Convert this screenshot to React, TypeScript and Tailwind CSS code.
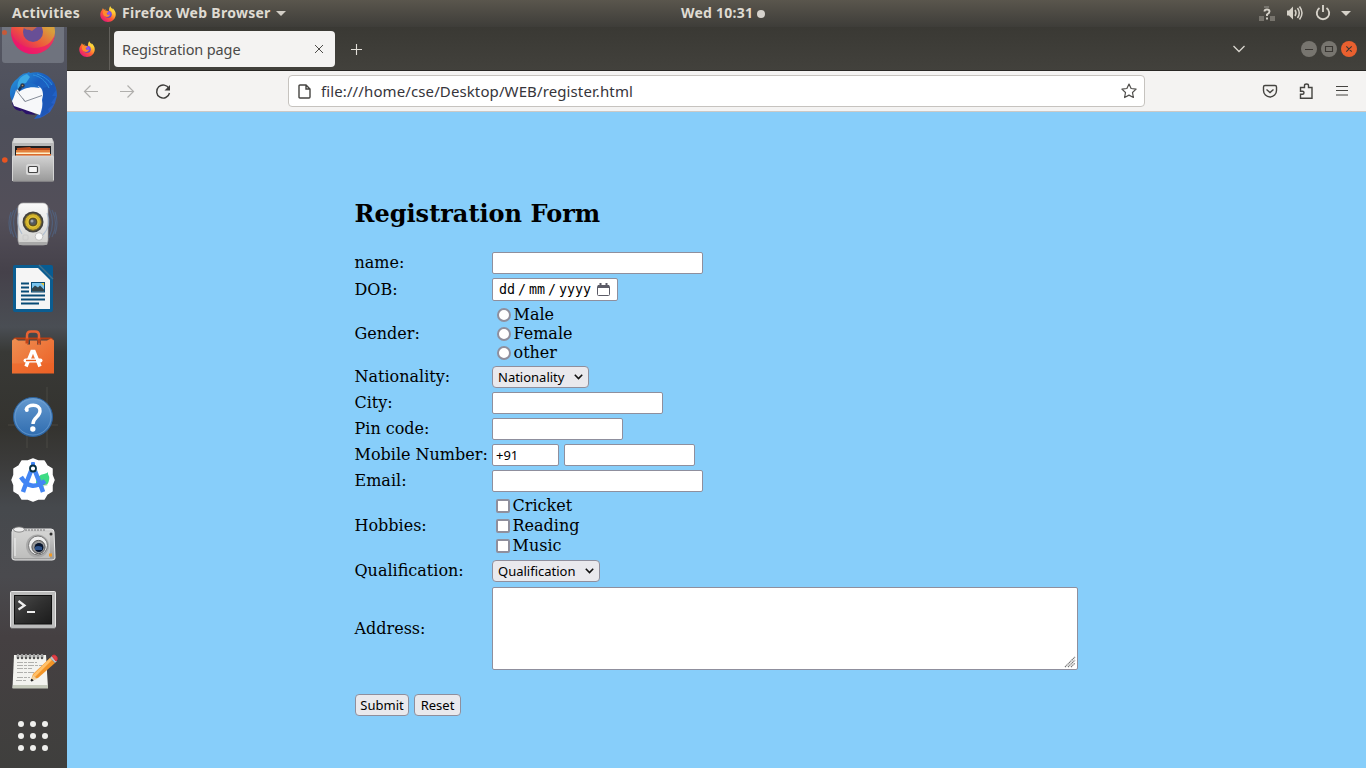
import { useId } from "react";
import type { ReactNode } from "react";

const ubuntu = "font-['Noto_Sans','Open_Sans',sans-serif]";

function FirefoxLogo({ size }: { size: number }) {
  const id = useId();
  return (
    <svg width={size} height={size} viewBox="0 0 32 32" className="block shrink-0">
      <defs>
        <linearGradient id={id + "a"} x1="0.85" y1="0.1" x2="0.2" y2="0.95">
          <stop offset="0" stopColor="#fff14a" />
          <stop offset="0.3" stopColor="#ffb02e" />
          <stop offset="0.6" stopColor="#ff5a36" />
          <stop offset="1" stopColor="#e5137c" />
        </linearGradient>
        <radialGradient id={id + "b"} cx="0.6" cy="0.35" r="0.8">
          <stop offset="0" stopColor="#9059ff" />
          <stop offset="1" stopColor="#4b3bb5" />
        </radialGradient>
      </defs>
      <path
        d="M4 8 6 4c.5 2 1.500 3 3 3.500 1-.3 2-.5 3-.5-1 .8-2 2-2 3h8c0-4 .5-7 2.500-10 .5 3 3 4 4.500 7 .5-1 .3-2 0-3 3 3 6.500 7 6.500 12.500C31.500 25.500 24.500 32 16 32S.5 25.500.5 17C.5 13 2 10.500 4 8Z"
        fill={`url(#${id}a)`}
      />
      <circle cx="16.500" cy="16.500" r="7" fill={`url(#${id}b)`} />
      <path d="M6 11c2-2 5-2 8-1.500 1.500.3 3 1 3.500 2.500-1.500 1-4 1.300-4 3 0 3 4.500 3.500 7 1.500-1 4.500-6 6.500-10 4.500C7 19.500 5 15 6 11Z" fill="#ff8a2b" />
      <path d="M21 9c4 2 5 6 4 10 2-3 2.500-7 .5-11l-4-4Z" fill="#ffd43a" opacity=".85" />
    </svg>
  );
}

function DockItem({ children, active }: { children: ReactNode; active?: boolean }) {
  return (
    <div className="flex h-16 w-[67px] shrink-0 items-center">
      <svg width="67" height="64" viewBox="0 0 67 64">
        {active && <rect x="2" y="-4" width="62" height="67" rx="3" fill="#8c929c" opacity=".5" />}
        {children}
      </svg>
    </div>
  );
}

function Dock() {
  return (
    <aside className="flex w-[67px] shrink-0 flex-col justify-end overflow-hidden bg-[linear-gradient(180deg,#555763_0,#4d4f5a_90px,#534f59_190px,#45414a_245px,#4a4e54_300px,#383936_325px,#34332f_400px,#3b3b3a_435px,#46494d_480px,#4a4a4e_550px,#454042_610px,#3f3f3d_741px)]">
      <svg width="0" height="0" className="absolute">
        <defs>
          <linearGradient id="ff" x1=".9" y1=".2" x2=".3" y2="1">
            <stop offset=".2" stopColor="#d8a03c" />
            <stop offset=".6" stopColor="#ee5a3a" />
            <stop offset="1" stopColor="#e5106f" />
          </linearGradient>
          <linearGradient id="tb" x1="0" y1="0" x2="1" y2="1">
            <stop offset="0" stopColor="#2b9fe0" />
            <stop offset=".4" stopColor="#1a5fc0" />
            <stop offset=".7" stopColor="#1f62c6" />
            <stop offset="1" stopColor="#3a5cc4" />
          </linearGradient>
          <linearGradient id="metal" x1="0" y1="0" x2="0" y2="1">
            <stop offset="0" stopColor="#d2d2d2" />
            <stop offset="1" stopColor="#9a9a9a" />
          </linearGradient>
          <linearGradient id="pale" x1="0" y1="0" x2="0" y2="1">
            <stop offset="0" stopColor="#fafafa" />
            <stop offset="1" stopColor="#cfcfcd" />
          </linearGradient>
          <linearGradient id="bag" x1="0" y1="0" x2="1" y2="1">
            <stop offset="0" stopColor="#ee8f52" />
            <stop offset="1" stopColor="#ec5e24" />
          </linearGradient>
          <linearGradient id="help" x1="0" y1="0" x2="0" y2="1">
            <stop offset="0" stopColor="#6499cf" />
            <stop offset="1" stopColor="#2f6caf" />
          </linearGradient>
          <linearGradient id="term" x1="0" y1="0" x2="1" y2="1">
            <stop offset="0" stopColor="#4a4a4a" />
            <stop offset=".5" stopColor="#303030" />
            <stop offset="1" stopColor="#1c1c1c" />
          </linearGradient>
        </defs>
      </svg>

      <DockItem active>
        <circle cx="33" cy="32" r="22" fill="url(#ff)" />
        <path d="M11 32c1 14 10 22 22 22s21-8 22-20c-3 9-10 14-21 14S14 42 11 32Z" fill="#f0166e" opacity=".7" />
        <circle cx="33" cy="32" r="10" fill="#684f96" />
        <path d="M23 27c3 4 6 2 9 4l5-4h-14Z" fill="#c7684a" />
        <circle cx="4.500" cy="32.500" r="2.500" fill="#c65a3a" />
      </DockItem>

      <DockItem>
        <path d="M27 9l2-1 1 1c8-2 16 0 21 6 4 5 6 10 6 17l-2 7-2 4-3 5-6 4-4 2-6 1 5-6-20-6-7-6c-4-8-2-17 5-22 3-3 6-6 10-6Z" fill="url(#tb)" />
        <path d="M12 38c1 7 5 9 10 9l-3-3 7 6 10 1-12-9Z" fill="#2a1269" />
        <path d="m16 26 8-2 14-2c3 1 5 4 5 9l-1 5c1 5 0 9-2 15L14 42l-2-5c2-4 3-7 4-11Z" fill="#f7f8fa" />
        <path d="m16 26 9 11.500 17-6M25 37.500l-2-3" fill="none" stroke="#858c98" strokeWidth="1" />
        <path d="M18 26c-2-8 2-14 9-16l3 3-4 6-4 6Z" fill="#3daae5" />
        <path d="M20 22c6-5 14-4 20 2-7-1-11-1-16 1l-4 2Z" fill="#1d6cc7" />
        <path d="M43 24c5-1 10-3 11-6l2 8-4 6 4 0-5 7 3 1-6 5 1 3-8 5 2-11Z" fill="#1b55b3" opacity=".8" />
        <path d="M33 11c7 1 13 6 16 13M37 10c6 2 12 6 15 11" stroke="#2f91dc" fill="none" />
        <circle cx="22.500" cy="21.500" r="2.200" fill="#2a3a50" />
        <circle cx="22.500" cy="21.500" r=".8" fill="#c2935b" />
        <path d="m18 25 2-3 2 2-3 4Z" fill="#1a3355" />
      </DockItem>

      <DockItem>
        <circle cx="4.800" cy="32" r="2.800" fill="#e95420" />
        <path d="M14 10h38l2 4v39H12V14Z" fill="#b9b9b9" />
        <path d="M14 10h38l1 5H13Z" fill="#d9d9d9" />
        <rect x="15" y="18" width="36" height="14" fill="#1d1f22" />
        <path d="m17 20 13-1 1 1h19v5H17Z" fill="#bd4b1d" />
        <path d="M16 22h34v3H16Z" fill="#e2803d" />
        <path d="M16 24.500h34v1.500H16Z" fill="#fff0c8" />
        <path d="M16 26h35v3H16Z" fill="#dc6b2b" />
        <rect x="12.500" y="28" width="41" height="25" rx="1" fill="url(#metal)" stroke="#ddd" strokeWidth=".8" />
        <rect x="26" y="36" width="14" height="11" rx="2.500" fill="#d9d9d9" />
        <rect x="28.500" y="38.500" width="9" height="6" rx="1" fill="#f6f6f6" stroke="#464646" strokeWidth="1.200" />
        <path d="M13 53h41" stroke="#7a7a7a" />
      </DockItem>

      <DockItem>
        <path d="M14 18q-7 13 0 27M17 16q-7 14 0 30M11 20q-4 11 0 22M52 18q7 13 0 27M49 16q7 14 0 30M55 20q4 11 0 22" fill="none" stroke="#50709a" strokeWidth="1.200" opacity=".5" />
        <rect x="18" y="11" width="30" height="42" rx="5" fill="url(#pale)" stroke="#aaa" strokeWidth=".7" />
        <rect x="18.500" y="50" width="29" height="3" rx="1.500" fill="#a8a8a8" />
        <circle cx="33" cy="30" r="10.500" fill="#43423e" />
        <circle cx="33" cy="30" r="8.300" fill="#d3b32c" stroke="#7a6a29" />
        <circle cx="33" cy="30" r="5" fill="#5d5020" stroke="#f4d640" />
        <circle cx="33" cy="30" r="3" fill="#555a60" />
        <circle cx="32" cy="29" r="1.500" fill="#a4a8ac" />
        <circle cx="39" cy="44.500" r="3.800" fill="#f8f8f8" stroke="#b5b5b5" strokeWidth=".8" />
        <rect x="23" y="43" width="5" height="5" rx="1" fill="none" stroke="#cacaca" />
        <path d="M19 21q-4 10 3 21M47 21q5 12-4 22" fill="none" stroke="#a0b4cd" strokeWidth="1.200" opacity=".7" />
      </DockItem>

      <DockItem>
        <g transform="translate(0 1)">
          <path d="M15 8h24l14 14v31q0 2-2 2H15q-2 0-2-2V10q0-2 2-2Z" fill="#0b5d91" />
          <path d="M40 8h11q2 0 2 2v11Z" fill="#075c93" />
          <path d="M16 11h22l12 12v29H16Z" fill="#f5f5f5" />
          <path d="M39 8 53 22" stroke="#3a7394" strokeWidth="1.500" />
          <path d="M21 26.500h8M21 30.500h8M21 34.500h8M21 38.500h24M21 42.500h24M21 46.500h18" stroke="#084b76" strokeWidth="2" />
          <rect x="31" y="25" width="14" height="10.500" fill="#084b76" />
          <rect x="32" y="26" width="12" height="8.500" fill="#79c4ee" />
          <path d="M32 34.500v-3l3-3 3 2 2-2 4 4v2Z" fill="#33444b" />
          <path d="M41 26h3v3Z" fill="#edc633" />
        </g>
      </DockItem>

      <DockItem>
        <g transform="translate(0 -.5)">
          <path d="m12 20 3-2h36l3 2Z" fill="#b73e12" />
          <path d="M27 25v-9q0-4 4-4h4q4 0 4 4v9" fill="none" stroke="#e96232" strokeWidth="2.500" />
          <path d="m12 21 3-2 3 2h9v4h3v-4h7v4h4v-4h6l4-2 3 2v33H12Z" fill="url(#bag)" />
          <path d="M27 19v5M39 19v5" stroke="#c24418" strokeWidth="3" />
          <path d="M12 44h42v9.500H12Z" fill="#ec6426" opacity=".55" />
          <path d="m26 47 6-15h2L40 47" fill="none" stroke="#fff" strokeWidth="3.500" />
          <rect x="23.500" y="39" width="19" height="4" rx="2" fill="#fff" />
          <path d="M26 41h10" stroke="#e85e20" strokeWidth="1.400" />
        </g>
      </DockItem>

      <DockItem>
        <path d="M8 41h50M27 64V28M47 64V3" stroke="#77756b" opacity=".3" />
        <circle cx="33" cy="33" r="19.500" fill="url(#help)" stroke="#2c639f" />
        <circle cx="33" cy="33" r="18" fill="none" stroke="#78a7d5" opacity=".6" />
        <path d="M26 26c1-6 14-7 14 1 0 6-7 6-7 13" fill="none" stroke="#fff" strokeWidth="3.400" />
        <circle cx="26.800" cy="26" r="2" fill="#fff" />
        <circle cx="32.800" cy="45" r="2.700" fill="#fff" />
      </DockItem>

      <DockItem>
        <path d="m33 11 5 2 6 0 3 5 5 3 0 6 2 5-2 5 0 6-5 3-3 5-6 0-5 2-5-2-6 0-3-5-5-3 0-6-2-5 2-5 0-6 5-3 3-5 6 0Z" fill="#fff" stroke="#fff" strokeWidth="1.500" strokeLinejoin="round" />
        <path d="M36 34a9 9 0 0 1 8-8l3-1 1-1v2q3 5-1 11l-5 2-6-3Z" fill="#3ddc84" />
        <path d="M38 36q6 2 10 1" stroke="#fff" />
        <path d="m31 23-7 18-1 3M35 23l7 18 1 3M21 29q9 15 24 4" fill="none" stroke="#4285f4" strokeWidth="4.500" />
        <rect x="31" y="14" width="4" height="5" rx="1" fill="#4285f4" />
        <circle cx="33" cy="20.500" r="3" fill="#fff" stroke="#073042" strokeWidth="1.800" />
      </DockItem>

      <DockItem>
        <path d="M13 17h38q3 0 3 3l1 26q0 2-3 2H15q-3 0-3-2V20Z" fill="url(#metal)" stroke="#e9e9e9" />
        <path d="M14 20h36v26H14Z" fill="#d8d8d7" opacity=".55" />
        <ellipse cx="19" cy="17.500" rx="5.500" ry="2.600" fill="#eee" stroke="#777" strokeWidth=".8" />
        <path d="M25 18h20" stroke="#777" strokeDasharray="2 1" />
        <circle cx="37.500" cy="34" r="11.500" fill="#aaa" />
        <circle cx="38" cy="33.500" r="9.500" fill="#eee" stroke="#777" />
        <circle cx="38.500" cy="35" r="6.600" fill="#999" stroke="#555" />
        <circle cx="39" cy="35.500" r="4.500" fill="#07142c" />
        <path d="M35 35q3-2 7 0v3h-7Z" fill="#2d5188" />
        <circle cx="51" cy="22" r="1.500" fill="#303030" />
        <rect x="49" y="41.500" width="3" height="3" fill="#f09a27" />
        <path d="M15 26v18" stroke="#f2f2f2" />
      </DockItem>

      <DockItem>
        <rect x="10.500" y="15.500" width="45" height="36" rx="1" fill="#bcbcbc" stroke="#e8e8e8" />
        <rect x="14" y="19" width="38" height="29.500" fill="#101010" />
        <rect x="15" y="20" width="36" height="27.500" fill="url(#term)" />
        <path d="m18.500 25 6 4.500-6 4" fill="none" stroke="#eee" strokeWidth="2.200" />
        <path d="M27 36h8" stroke="#eee" strokeWidth="2" />
        <path d="M11 52h44" stroke="#8b8b8b" />
      </DockItem>

      <DockItem>
        <path d="M14 15h32l2 33H12.500Z" fill="#f3f3ef" />
        <path d="M13 45h35v3.500H12.500Z" fill="#c5c9bb" />
        <path d="M18 15v3M22 15v3M26 15v3M30 15v3M34 15v3M38 15v3M42 15v3" stroke="#555" strokeWidth="2.500" strokeLinecap="round" />
        <path d="M18 14v3M22 14v3M26 14v3M30 14v3M34 14v3M38 14v3M42 14v3" stroke="#ddd" strokeWidth="1" />
        <path d="M17 22.500h20M17 25.500h25M17 28.500h15M17 32.500h18M17 37.500h13M16 40.500h10" stroke="#b0b0ad" strokeDasharray="6 1 3 1" />
        <path d="m31 40 2-6 17-16 5 5-17 15Z" fill="#f29427" />
        <path d="m33 35 17-17 2 2-17 17Z" fill="#ffc069" />
        <path d="m31 41 2-6 4 4Z" fill="#eed0a0" />
        <path d="m31 41 .6-2 1.500 1.500Z" fill="#222" stroke="#222" />
        <path d="m50 18 2-2 5 5-2 2Z" fill="#bbc2c5" />
        <path d="m52 16 2-1q4 1 3 5l-1 1Z" fill="#e14248" stroke="#d9333a" />
      </DockItem>

      <DockItem>
        {[20, 32, 44].map((y) =>
          [21, 33, 45].map((x) => <circle key={`${x}-${y}`} cx={x} cy={y} r="3" fill="#efefed" />)
        )}
      </DockItem>
    </aside>
  );
}

function TopBar() {
  return (
    <header className={`flex h-[27px] shrink-0 items-center bg-linear-to-b from-[#5a564d] to-[#3e3d39] pl-3 text-[14px] leading-none font-bold text-[#dfdbd2] ${ubuntu}`}>
      <span className="w-[88px] pb-px tracking-[0.3px]">Activities</span>
      <FirefoxLogo size={16} />
      <span className="ml-[6px] w-[154px] pb-px whitespace-nowrap tracking-[0.280px]">Firefox Web Browser</span>
      <svg width="10" height="5" viewBox="0 0 10 5"><path d="M0 0h10L5 5Z" fill="#d2cec6" /></svg>
      <span className="ml-[395px] w-[76px] pb-px whitespace-nowrap tracking-[0.250px]">Wed 10:31</span>
      <span className="size-2 rounded-full bg-[#d5d2cc]" />
      <svg className="ml-auto" width="107" height="27" viewBox="0 0 107 27" fill="none">
        <path d="M0 16h5v5H0ZM11 16h5v5h-5ZM5 6h5v2H5Z" fill="#77746d" />
        <path d="M5.500 11.500q0-2 2.500-2t2.500 2q0 1.500-2.500 3v1.500M8 17.500v2" stroke="#d6d2c9" strokeWidth="1.900" />
        <path d="M28 10.500h2l4-4v13l-4-4h-2Z" fill="#d6d2c9" />
        <path d="M36 10q2 3 0 6M38.500 8q3.500 5 0 10M40.500 6.500q5 6.500 0 13" stroke="#d6d2c9" strokeWidth="1.500" />
        <path d="M60.500 8a6.200 6.200 0 1 0 7 0M64 5v7" stroke="#d6d2c9" strokeWidth="1.900" />
        <path d="M82 11h10l-5 5Z" fill="#d6d2c9" />
      </svg>
    </header>
  );
}

function TabBar() {
  return (
    <div className={`flex h-11 shrink-0 items-center border-b border-[#282724] bg-linear-to-b from-[#3a3934] to-[#42413c] ${ubuntu}`}>
      <div className="flex h-full w-[43px] items-center border-r border-[#62605b] pl-3">
        <FirefoxLogo size={16} />
      </div>
      <div className="ml-1 flex h-9 w-[221px] items-center rounded bg-[#f4f3f2] pr-[11px] pl-2 text-[14.5px] text-[#4b4a48]">
        <span className="mt-[2px] mr-auto tracking-[-0.120px]">Registration page</span>
        <svg width="10" height="10" viewBox="0 0 10 10"><path d="m1 1 8 8M9 1 1 9" stroke="#4e4d4a" strokeWidth="1" /></svg>
      </div>
      <svg className="mt-[2px] ml-4" width="11" height="11" viewBox="0 0 11 11"><path d="M5.500 0v11M0 5.500h11" stroke="#e2dfd9" strokeWidth="1.100" /></svg>
      <svg className="ml-auto" width="14" height="8" viewBox="0 0 14 8"><path d="m1.500 1 5.500 5.500L12.500 1" fill="none" stroke="#d9d6cf" strokeWidth="1.300" /></svg>
      <svg className="mr-2 ml-[54px]" width="58" height="18" viewBox="0 0 58 18" fill="none">
        <circle cx="9" cy="9" r="8" fill="#77756f" />
        <circle cx="29" cy="9" r="8" fill="#77756f" />
        <circle cx="49" cy="9" r="8" fill="#e9602f" />
        <path d="M5 9.500h8M25.500 6.500h7v5h-7ZM46.300 6.300l5.400 5.400m0-5.400-5.400 5.400" stroke="#3a3733" strokeWidth="1.100" />
      </svg>
    </div>
  );
}

function ToolBar() {
  return (
    <div className={`flex h-[41px] shrink-0 items-center border-b border-[#ccc9c5] bg-[#f4f3f2] ${ubuntu}`}>
      <svg className="ml-4" width="90" height="20" viewBox="0 0 90 20" fill="none">
        <path d="M15 10.500H1.500m6-6-6 6 6 6M37 10.500h13.500m-6-6 6 6-6 6" stroke="#b0afad" strokeWidth="1.200" />
        <path d="M86 7.700A6.500 6.500 0 1 0 86.500 12" stroke="#3d3c3a" strokeWidth="1.400" />
        <path d="M87 4v5.500h-5.500Z" fill="#3d3c3a" />
      </svg>
      <div className="ml-[115px] flex h-8 w-[857px] items-center rounded border border-[#c6c3bf] bg-white pr-[7px] pl-[9px] text-[#36353b]">
        <svg width="13" height="15" viewBox="0 0 13 15"><path d="M2 1h6l4 4v8q0 1-1 1H2q-1 0-1-1V2q0-1 1-1ZM8 1v4h4" fill="none" stroke="#454441" strokeWidth="1.400" /></svg>
        <span className="mt-px mr-auto ml-[10px] text-[15px] tracking-[0.110px]">file:///home/cse/Desktop/WEB/register.html</span>
        <svg width="16" height="16" viewBox="0 0 16 16"><path d="m8 1 2.100 4.500 5 .6-3.600 3.400.9 5L8 12.100l-4.400 2.400.9-5L.9 6.100l5-.6Z" fill="none" stroke="#504f4c" strokeWidth="1.200" strokeLinejoin="round" /></svg>
      </div>
      <svg className="mr-4 ml-auto" width="89" height="20" viewBox="0 0 89 20" fill="none" stroke="#454441" strokeWidth="1.400">
        <path d="M3 4.500h10q1.500 0 1.500 1.500v3.500a6.500 6.500 0 0 1-13 0V6q0-1.500 1.500-1.500Z" transform="translate(1 0)" />
        <path d="m5.500 8.500 3.500 3 3.500-3" />
        <path d="M39.500 6.500h4V4.500q0-1.500 2-1.500t2 1.500v2h3.500v10.800H39.500v-4h2q1.500 0 1.500-1.500t-1.500-1.500h-2Z" />
        <path d="M75 5.500h12M75 9.500h12M75 14h12" strokeWidth="1.200" />
      </svg>
    </div>
  );
}

const field = "block h-[22px] rounded-[2px] border border-[#8f8f9d] bg-white px-[3px] text-[13px] text-black outline-none";

function Row({ label, height, children, raised = true }: { label: string; height: string; children: ReactNode; raised?: boolean }) {
  return (
    <div className={`flex items-center ${height}`}>
      <span className={`-ml-[0.5px] w-[137.5px] shrink-0 whitespace-nowrap ${raised ? "pb-[2px]" : ""}`}>{label}</span>
      {children}
    </div>
  );
}

function Picker({ label, width }: { label: string; width: string }) {
  return (
    <button type="button" className={`flex h-[22px] items-center justify-between rounded-[4px] border border-[#8f8f9d] bg-[#e9e9ed] pr-[5px] pl-[5px] text-[13px] ${ubuntu} ${width}`}>
      <span>{label}</span>
      <svg width="9" height="6" viewBox="0 0 9 6"><path d="m.8.800 3.700 3.700L8.200.800" fill="none" stroke="#111" strokeWidth="1.600" /></svg>
    </button>
  );
}

function Choice({ label, type }: { label: string; type: "radio" | "checkbox" }) {
  return type === "radio" ? (
    <label className="flex h-[19px] items-center pl-[5px] leading-[19px]">
      <input type="radio" name="gender" className="mt-px mr-[2.5px] size-[14px] appearance-none rounded-full border-2 border-[#8f8f9d] bg-white" />
      {label}
    </label>
  ) : (
    <label className="flex h-5 items-center pl-1 leading-[19px]">
      <input type="checkbox" className="mr-[2.5px] size-[14px] appearance-none rounded-[2px] border-2 border-[#8f8f9d] bg-white" />
      <span className="pb-[2px]">{label}</span>
    </label>
  );
}

function RegistrationPage() {
  const action = `flex h-[22px] items-center justify-center rounded-[4px] border border-[#8f8f9d] bg-[#e9e9ed] text-[13px] ${ubuntu}`;
  return (
    <main className="flex-1 overflow-hidden bg-[#87cefa] pt-[88px] pl-[288px] font-['DejaVu_Serif',serif] text-[16px] leading-[19px] text-black">
      <h2 className="-ml-[0.5px] text-[24px] leading-[28px] font-bold">Registration Form</h2>
      <form className="mt-6 flex flex-col">
        <div className="flex flex-col gap-1">
          <Row label="name:" height="h-[22px]"><input className={`w-[211px] ${field}`} /></Row>
          <Row label="DOB:" height="h-[23px]" raised={false}>
            <div className="flex h-[23px] w-[126px] items-center rounded-[2px] border border-[#8f8f9d] bg-white pb-px pl-[6px] font-['DejaVu_Sans_Mono','Liberation_Mono',monospace] text-[13.333px]">
              <span className="w-4">dd</span><span className="w-[14px] text-center">/</span><span className="w-4">mm</span><span className="w-[14px] text-center">/</span><span className="mr-[6px] w-8">yyyy</span>
              <svg className="mt-px" width="13" height="13" viewBox="0 0 13 13"><path d="M1.500 2.500h10q1 0 1 1v8q0 1-1 1h-10q-1 0-1-1v-8q0-1 1-1Z" fill="none" stroke="#5b5b66" /><path d="M1 2h11v3H1ZM2.500 0h2v3h-2ZM8.500 0h2v3h-2Z" fill="#5b5b66" /></svg>
            </div>
          </Row>
          <Row label="Gender:" height="h-[57px]" raised={false}>
            <div className="flex flex-col">{["Male", "Female", "other"].map((t) => <Choice key={t} label={t} type="radio" />)}</div>
          </Row>
          <Row label="Nationality:" height="h-[22px]"><Picker label="Nationality" width="w-[97px]" /></Row>
          <Row label="City:" height="h-[22px]"><input className={`w-[171px] ${field}`} /></Row>
          <Row label="Pin code:" height="h-[22px]"><input className={`w-[131px] ${field}`} /></Row>
          <Row label="Mobile Number:" height="h-[22px]">
            <input className={`w-[67px] ${field} ${ubuntu}`} defaultValue="+91" />
            <input className={`ml-[5px] w-[131px] ${field}`} />
          </Row>
          <Row label="Email:" height="h-[22px]"><input className={`w-[211px] ${field}`} /></Row>
          <Row label="Hobbies:" height="h-[60px]">
            <div className="flex flex-col">{["Cricket", "Reading", "Music"].map((t) => <Choice key={t} label={t} type="checkbox" />)}</div>
          </Row>
          <Row label="Qualification:" height="h-[22px]"><Picker label="Qualification" width="w-[108px]" /></Row>
          <Row label="Address:" height="h-[84px]" raised={false}>
            <div className="mt-px flex h-[83px] w-[586px] items-end justify-end rounded-[2px] border border-[#8f8f9d] bg-white pr-px pb-px">
              <svg width="12" height="12" viewBox="0 0 12 12"><path d="m1 11 10-10M4 11l7-7M7 11l4-4" stroke="#777" strokeWidth="1.200" strokeDasharray="1.400 .5" /></svg>
            </div>
          </Row>
        </div>
        <div className="mt-6 flex gap-[5px]">
          <button type="button" className={`${action} w-[54px]`}>Submit</button>
          <button type="button" className={`${action} w-[47px]`}>Reset</button>
        </div>
      </form>
    </main>
  );
}

export default function App() {
  return (
    <div className="flex h-[768px] w-[1366px] flex-col overflow-hidden">
      <TopBar />
      <div className="flex min-h-0 flex-1">
        <Dock />
        <div className="flex min-w-0 flex-1 flex-col">
          <TabBar />
          <ToolBar />
          <RegistrationPage />
        </div>
      </div>
    </div>
  );
}
